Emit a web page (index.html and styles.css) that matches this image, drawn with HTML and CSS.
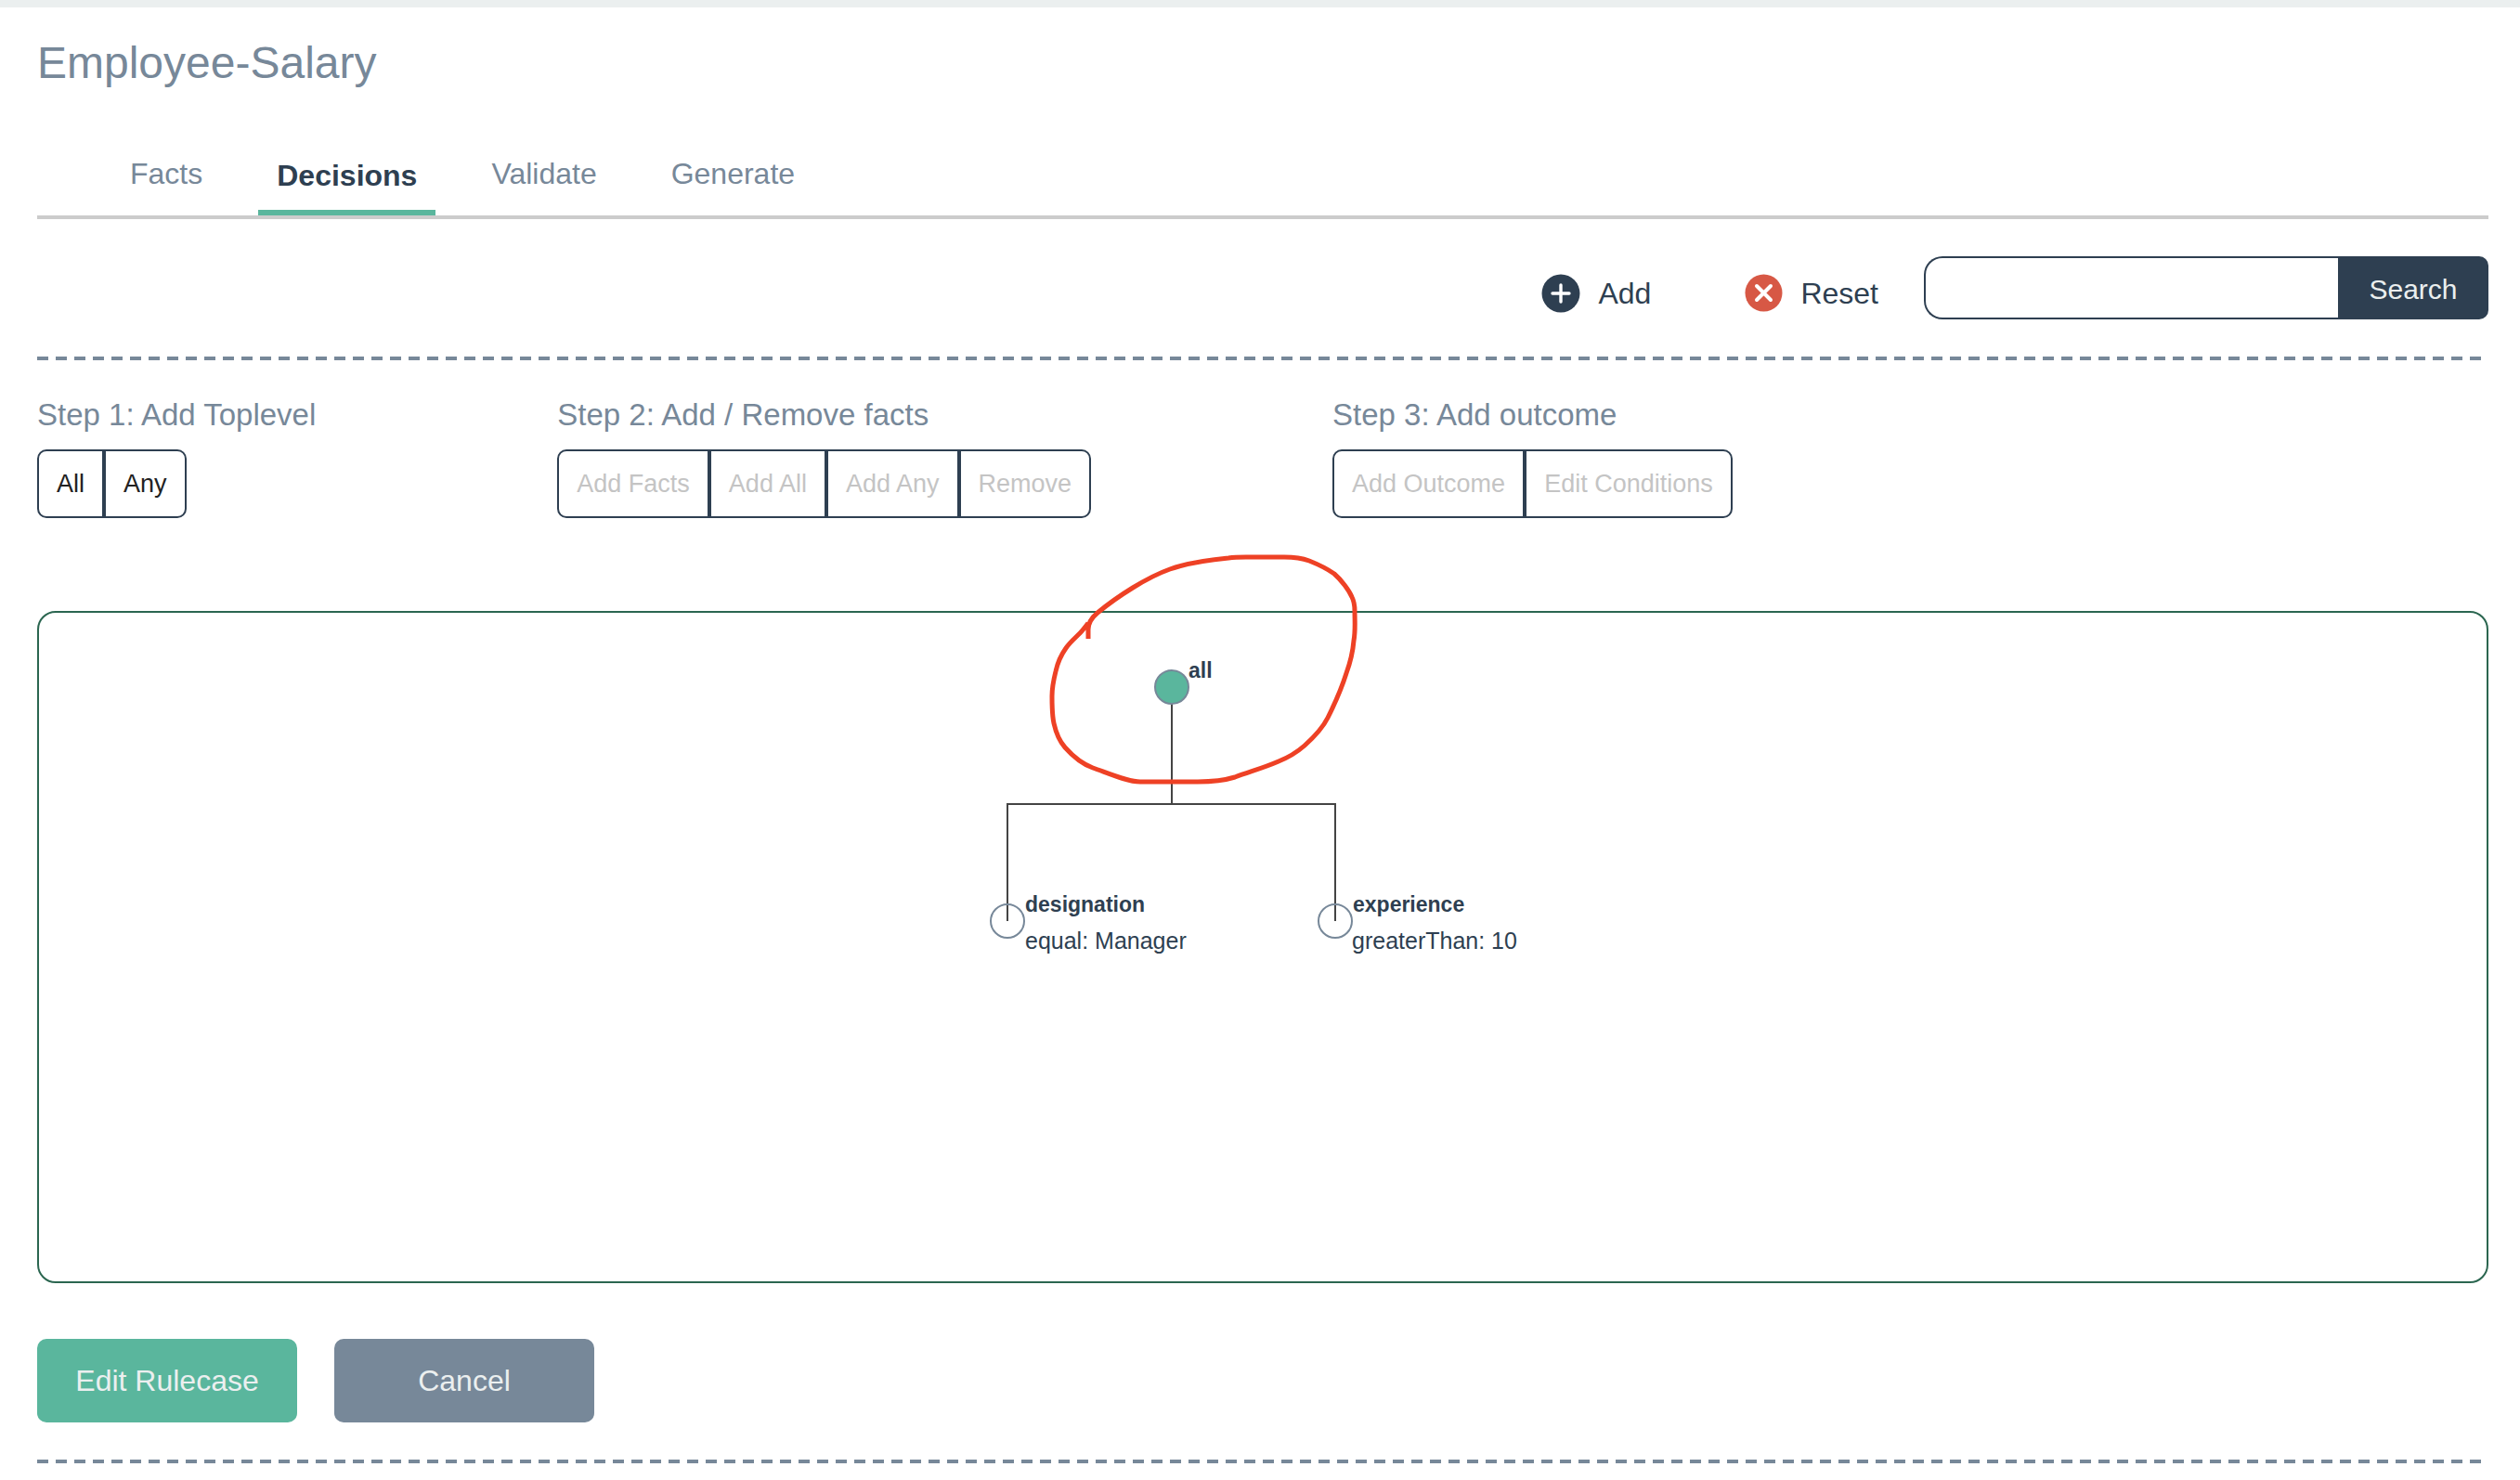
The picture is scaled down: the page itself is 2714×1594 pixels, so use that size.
FILE: index.html
```html
<!DOCTYPE html>
<html lang="en">
<head>
<meta charset="utf-8">
<title>Employee-Salary</title>
<link rel="stylesheet" href="styles.css">
</head>
<body>
<main class="page">
  <h1 class="page-title">Employee-Salary</h1>

  <nav class="tabs">
    <a class="tab" href="#facts">Facts</a>
    <a class="tab tab-active" href="#decisions" aria-current="page">Decisions</a>
    <a class="tab" href="#validate">Validate</a>
    <a class="tab" href="#generate">Generate</a>
  </nav>

  <div class="toolbar">
    <button class="tool" type="button">
      <svg class="tool-icon" viewBox="0 0 42 42" aria-hidden="true"><circle cx="21" cy="21" r="20.500" fill="#2e3f51"/><path d="M21 12v18M12 21h18" stroke="#fff" stroke-width="3.400" stroke-linecap="round"/></svg>
      Add
    </button>
    <button class="tool" type="button">
      <svg class="tool-icon" viewBox="0 0 42 42" aria-hidden="true"><circle cx="21.500" cy="20.500" r="20" fill="#d75845"/><path d="M14 13l15 15M29 13l-15 15" stroke="#fff" stroke-width="4" stroke-linecap="round"/></svg>
      Reset
    </button>
    <form class="search">
      <input class="search-input" type="text" aria-label="Search decisions">
      <button class="search-button" type="button">Search</button>
    </form>
  </div>
  <hr class="divider">

  <div class="steps">
    <section>
      <h2 class="step-title">Step 1: Add Toplevel</h2>
      <div class="button-group">
        <button type="button">All</button>
        <button type="button">Any</button>
      </div>
    </section>
    <section>
      <h2 class="step-title">Step 2: Add / Remove facts</h2>
      <div class="button-group">
        <button type="button" disabled>Add Facts</button>
        <button type="button" disabled>Add All</button>
        <button type="button" disabled>Add Any</button>
        <button type="button" disabled>Remove</button>
      </div>
    </section>
    <section>
      <h2 class="step-title">Step 3: Add outcome</h2>
      <div class="button-group">
        <button type="button" disabled>Add Outcome</button>
        <button type="button" disabled>Edit Conditions</button>
      </div>
    </section>
  </div>

  <div class="canvas">
    <svg class="tree">
      <path class="link" d="M1220 80V206H1043V332M1220 206H1396V332"/>
      <circle class="node node-root" cx="1220" cy="80" r="18"/>
      <circle class="node" cx="1043" cy="332" r="18"/>
      <circle class="node" cx="1396" cy="332" r="18"/>
      <text class="node-name" x="1238" y="70">all</text>
      <text class="node-name" x="1062" y="322">designation</text>
      <text class="node-rule" x="1062" y="362">equal: Manager</text>
      <text class="node-name" x="1415" y="322">experience</text>
      <text class="node-rule" x="1414" y="362">greaterThan: 10</text>
      <path class="marker" d="M1130 28V18C1130 11 1134 5 1140 0C1152 -10 1165 -19 1178 -27C1191 -35 1204 -42 1218 -47C1238 -54 1260 -57 1281 -59C1288 -60 1294 -60 1300 -60H1341C1351 -60 1360 -59 1368 -56C1378 -52 1388 -47 1395 -42C1403 -35 1411 -24 1414 -17C1417 -11 1417 -6 1417 -2C1417 9 1418 19 1416 30C1415 42 1412 54 1408 65C1403 81 1396 97 1388 113C1382 125 1373 134 1363 143C1355 150 1345 156 1335 160C1319 167 1304 171 1288 177C1275 181 1262 182 1248 182H1186C1172 182 1152 173 1135 167C1124 163 1113 154 1105 145C1098 137 1095 128 1093 119C1091 110 1091 100 1091 90C1091 81 1093 71 1095 63C1097 54 1101 45 1106 38C1110 32 1116 27 1121 22C1124 19 1127 15 1130 11"/>
    </svg>
  </div>

  <div class="actions">
    <button class="action action-primary" type="button">Edit Rulecase</button>
    <button class="action" type="button">Cancel</button>
  </div>
  <hr class="divider">
</main>
</body>
</html>
```

FILE: styles.css
```css
* { box-sizing: border-box; }

body {
  margin: 0;
  background: #fff;
  color: #2e3f51;
  font-family: "Liberation Sans", Arial, sans-serif;
  font-size: 32px;
}

button, input { font: inherit; color: inherit; }

.page {
  border-top: 8px solid #ebefef;
  padding: 0 34px 18px 40px;
}

.page-title {
  margin: 32px 0 0;
  font-size: 48px;
  line-height: 56px;
  font-weight: 400;
  color: #778899;
}

.tabs {
  display: flex;
  gap: 40px;
  margin-top: 56px;
  padding-left: 80px;
  border-bottom: 4px solid #ccc;
}

.tab {
  padding: 17px 20px 27px;
  line-height: 36px;
  color: #778899;
  text-decoration: none;
}

.tab-active {
  padding: 19px 20px;
  border-bottom: 6px solid #5ab69d;
  color: #2e3f51;
  font-weight: 700;
}

.toolbar {
  display: flex;
  justify-content: flex-end;
  align-items: flex-start;
  margin-top: 40px;
}

.tool {
  display: flex;
  align-items: center;
  gap: 19px;
  height: 40px;
  margin: 20px 0 0;
  padding: 0;
  border: 0;
  background: none;
}

.tool + .tool { margin-left: 100px; }

.tool-icon { width: 42px; height: 42px; }

.search {
  display: flex;
  width: 608px;
  height: 68px;
  margin-left: 49px;
}

.search-input {
  flex: 1;
  min-width: 0;
  padding: 0 20px;
  border: 2px solid #2e3f51;
  border-right: 0;
  border-radius: 20px 0 0 20px;
  outline: 0;
}

.search-button {
  width: 162px;
  padding: 3px 0 0;
  border: 0;
  border-radius: 0 10px 10px 0;
  background: #2e3f51;
  color: #ebefef;
  font-size: 30px;
}

.divider {
  height: 4px;
  margin: 40px 0 0;
  border: 0;
  background: repeating-linear-gradient(90deg, #778899 0 12px, transparent 12px 20px);
}

.steps {
  display: flex;
  gap: 260px;
  margin-top: 40px;
}

.step-title {
  margin: 0 0 18px;
  font-size: 33px;
  line-height: 38px;
  font-weight: 400;
  color: #778899;
  white-space: nowrap;
}

.button-group { display: flex; }

.button-group button {
  height: 74px;
  padding: 0 19px;
  border: 2px solid #2e3f51;
  background: #fff;
  color: #222;
  font-size: 27px;
  white-space: nowrap;
}

.button-group button:disabled { color: #c4c4c4; }
.button-group button:first-child { border-radius: 10px 0 0 10px; }
.button-group button:last-child { border-radius: 0 10px 10px 0; }

.canvas {
  height: 724px;
  margin-top: 100px;
  border: 2px solid #2b6650;
  border-radius: 20px;
}

.tree {
  display: block;
  width: 100%;
  height: 100%;
  overflow: visible;
}

.link { fill: none; stroke: #444; stroke-width: 2px; }
.node { fill: none; stroke: #778899; stroke-width: 2px; }
.node-root { fill: #5ab69d; }
.node-name { fill: #2e3f51; font-size: 23px; font-weight: 700; }
.node-rule { fill: #2e3f51; font-size: 25px; }
.marker { fill: none; stroke: #ee4125; stroke-width: 5px; }

.actions {
  display: flex;
  gap: 40px;
  margin-top: 60px;
}

.action {
  width: 280px;
  height: 90px;
  padding: 0;
  border: 0;
  border-radius: 10px;
  background: #778899;
  color: #ebefef;
}

.action-primary { background: #5ab69d; }
```
